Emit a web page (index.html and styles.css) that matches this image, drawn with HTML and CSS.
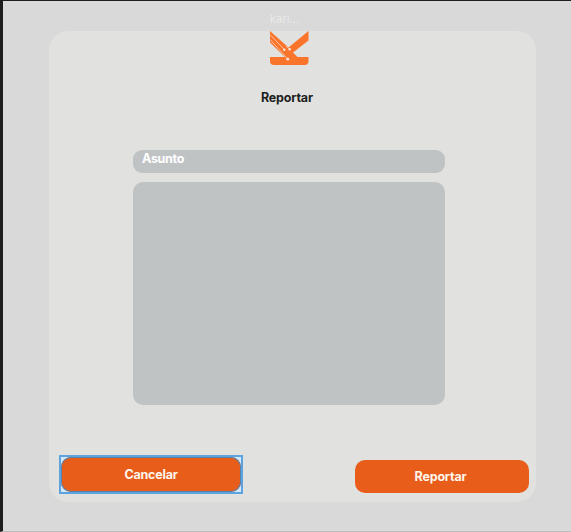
FILE: index.html
```html
<!DOCTYPE html>
<html lang="es">
<head>
<meta charset="utf-8">
<title>Reportar</title>
<link rel="stylesheet" href="styles.css">
</head>
<body>
<main class="screen">
  <div class="user">kari...</div>
  <section class="card">
    <svg class="logo" viewBox="0 0 39 34" aria-hidden="true">
      <path class="shape" d="M0 0L18.5 16.5L38.5 0V9.5L23 21.5L27.5 26H38.5V30Q38.5 34 34.5 34H4Q0 34 0 30V26H15L0 11.5Z"/>
      <path class="trace" d="M0 3.5L14 18.3M0 8.5L17.7 28M16 15L19.7 18.3"/>
      <circle class="dot" cx="19.7" cy="18.3" r="1.2"/>
      <circle class="dot" cx="14.3" cy="18.7" r="1.2"/>
      <circle class="dot" cx="17.8" cy="28.2" r="1.4"/>
    </svg>
    <h1 class="title">Reportar</h1>
    <form class="form">
      <div class="subject">Asunto</div>
      <div class="message"></div>
    </form>
    <div class="actions">
      <div class="focus"><button class="button cancel" type="button">Cancelar</button></div>
      <button class="button submit" type="button">Reportar</button>
    </div>
  </section>
</main>
</body>
</html>
```
FILE: styles.css
```css
* { box-sizing: border-box; }
body { margin: 0; font-family: Inter, "Liberation Sans", sans-serif; }
.screen {
  height: 532px;
  border-left: 3px solid #1e1c1e;
  border-top: 1px solid #1e1c1e;
  border-bottom: 1px solid #bdbdbd;
  background: #d9d9d9;
}
.user {
  height: 30px;
  padding: 10px 0 0 267px;
  font-size: 11.5px;
  line-height: 16px;
  font-weight: 300;
  color: #ededed;
}
.card {
  display: flex;
  flex-direction: column;
  width: 487px;
  height: 471px;
  margin-left: 46px;
  border-radius: 19px;
  background: #e1e1df;
}
.logo { width: 39px; height: 34px; margin-left: 221px; flex: none; }
.shape { fill: #fb742b; }
.trace { fill: none; stroke: #f5d5c0; stroke-width: .8; }
.dot { fill: #f5e9e0; }
.title {
  margin: 25px 0 0 212px;
  font-size: 12.5px;
  line-height: 16px;
  font-weight: 700;
  letter-spacing: -.2px;
  color: #1d1f1e;
}
.form {
  display: flex;
  flex-direction: column;
  gap: 9px;
  width: 312px;
  margin: 44px 0 0 84px;
}
.subject {
  height: 23px;
  padding-left: 9px;
  border-radius: 9px;
  background: #c0c3c4;
  color: #fff;
  font-size: 12.5px;
  font-weight: 700;
  letter-spacing: -.3px;
  line-height: 17px;
}
.message { height: 223px; border-radius: 10px; background: #c0c3c4; }
.actions {
  display: flex;
  align-items: flex-start;
  justify-content: space-between;
  margin: 50px 7px 0 10px;
}
.focus {
  width: 184px;
  height: 39px;
  border: 2px solid #5ca3df;
  background: #d3e8f4;
}
.button {
  display: block;
  padding: 0;
  border: 0;
  border-radius: 10px;
  background: #e85d1a;
  color: #fff5ec;
  font: 700 12.5px/16px Inter, "Liberation Sans", sans-serif;
  letter-spacing: -.2px;
}
.cancel { width: 180px; height: 35px; box-shadow: inset 0 0 0 1px #5682ac; }
.submit { width: 174px; height: 33px; margin-top: 5px; padding-right: 3px; }
```
